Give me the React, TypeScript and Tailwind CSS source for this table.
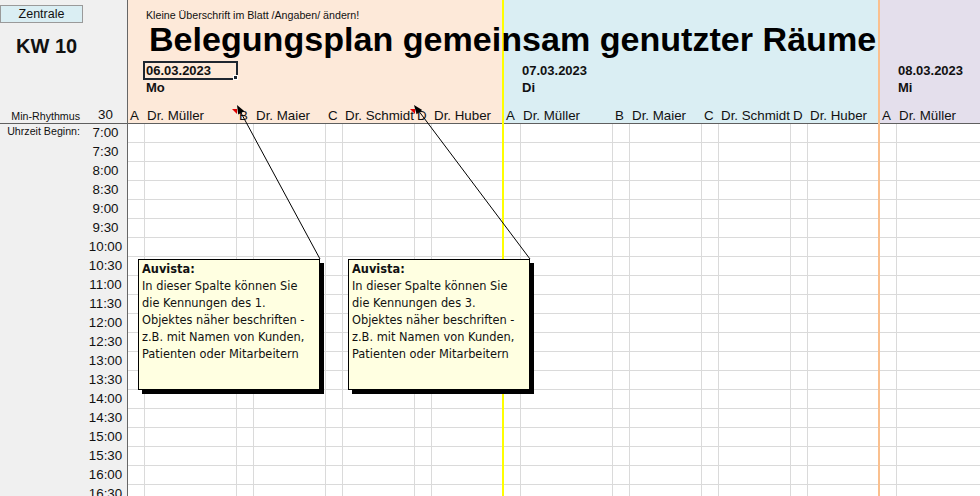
import React from 'react'

const cols = 'grid grid-cols-[17px_92px_17px_72px_17px_72px_17px_70px]'
const names = ['A', 'Dr. Müller', 'B', 'Dr. Maier', 'C', 'Dr. Schmidt', 'D', 'Dr. Huber']

const times: string[] = []
for (let h = 7; h <= 16; h++) {
  times.push(`${h}:00`)
  times.push(`${h}:30`)
}

type Day = { date: string; name: string; bg: string; line: string; first?: boolean }

const days: Day[] = [
  { date: '06.03.2023', name: 'Mo', bg: 'bg-[#fde9d9]', line: 'border-r-[#ffff00]', first: true },
  { date: '07.03.2023', name: 'Di', bg: 'bg-[#daeef3]', line: 'border-r-[#fac08f]' },
  { date: '08.03.2023', name: 'Mi', bg: 'bg-[#e4dfec]', line: 'border-r-[#fac08f]' },
]

function RedMark() {
  return (
    <span className="absolute right-0 top-[1px] w-0 h-0 border-l-[5px] border-l-transparent border-t-[5px] border-t-[#e00000]" />
  )
}

function DayColumn({ day }: { day: Day }) {
  return (
    <div className={`w-[376px] shrink-0 flex flex-col border-r-2 ${day.line}`}>
      <div className={`h-[104px] shrink-0 ${day.bg}`}>
        <div className="h-[22px] pt-[8px] pl-[18px] text-[10.67px] leading-[14px] whitespace-nowrap">
          {day.first && 'Kleine Überschrift im Blatt /Angaben/ ändern!'}
        </div>
        <div className="h-[34px] pl-[21px]">
          {day.first && (
            <div className="relative z-10 whitespace-nowrap text-[34.1px] leading-[34px] font-bold text-black">
              Belegungsplan gemeinsam genutzter Räume
            </div>
          )}
        </div>
        <div
          className={`relative mt-[5px] ml-[15px] w-[95px] h-[19px] border-2 pl-[1px] text-[13px] leading-[16px] font-bold ${
            day.first ? 'border-[#1e2630]' : 'border-transparent'
          }`}
        >
          {day.date}
          {day.first && (
            <span className="absolute right-[-2px] bottom-[-2px] w-[5px] h-[5px] bg-[#1e2630] border border-white" />
          )}
        </div>
        <div className="ml-[18px] text-[13px] leading-[16px] font-bold">{day.name}</div>
      </div>
      <div className={`${cols} h-[20px] shrink-0 border-b border-[#5f5f5f] ${day.bg} pt-[4px] text-[13.33px] leading-[15px]`}>
        {names.map((n, i) => (
          <div key={i} className="relative pl-[2px] whitespace-nowrap">
            {n}
            {day.first && (i === 1 || i === 5) && <RedMark />}
          </div>
        ))}
      </div>
      <div className="flex flex-col">
        {times.map((t) => (
          <div key={t} className={`${cols} shrink-0`}>
            {names.map((_, i) => (
              <div
                key={i}
                className={`h-[19px] border-b border-[#dadada] ${i < 7 ? 'border-r' : ''}`}
              />
            ))}
          </div>
        ))}
      </div>
    </div>
  )
}

function Comment({ left, num }: { left: string; num: string }) {
  return (
    <div
      className={`absolute ${left} top-[259px] z-30 w-[182px] h-[131px] border border-black bg-[#ffffe1] shadow-[4px_4px_0_#000] pl-[3px] pt-[1px] font-['DejaVu_Sans',sans-serif] text-[11.4px] leading-[17px] text-[#111] whitespace-nowrap`}
    >
      <div className="font-bold">Auvista:</div>
      <div>In dieser Spalte können Sie</div>
      <div>die Kennungen des {num}</div>
      <div>Objektes näher beschriften -</div>
      <div>z.B. mit Namen von Kunden,</div>
      <div>Patienten oder Mitarbeitern</div>
    </div>
  )
}

export default function App() {
  return (
    <div className="relative w-[980px] h-[496px] overflow-hidden flex items-start bg-white text-[#111] font-['Liberation_Sans',Arial,sans-serif]">
      <div className="w-[128px] shrink-0 flex flex-col border-r border-[#666] bg-[#f0f0f0]">
        <div className="h-[104px] shrink-0">
          <div className="mt-[5px] w-[83px] h-[18px] border border-[#9a9a9a] bg-[#daeef3] flex items-center justify-center text-[12.5px] leading-none">
            Zentrale
          </div>
          <div className="mt-[11px] ml-[16px] text-[20px] leading-[24px] font-bold">KW 10</div>
        </div>
        <div className="h-[20px] shrink-0 flex border-b border-[#5f5f5f]">
          <div className="w-[84px] pr-[4px] pt-[5px] text-right text-[10.67px] leading-[14px]">Min-Rhythmus</div>
          <div className="flex-1 pt-[3px] text-center text-[13.33px] leading-[15px]">30</div>
        </div>
        {times.map((t, i) => (
          <div key={t} className="h-[19px] flex shrink-0">
            <div className="w-[84px] pr-[4px] text-right text-[10.67px] leading-[14px] whitespace-nowrap">
              {i === 0 && 'Uhrzeit Beginn:'}
            </div>
            <div className="flex-1 text-center text-[13.33px] leading-[18px]">{t}</div>
          </div>
        ))}
      </div>

      {days.map((d) => (
        <DayColumn key={d.date} day={d} />
      ))}

      <svg className="absolute inset-0 z-20 pointer-events-none" width="980" height="496">
        <line x1="240" y1="111" x2="320" y2="259" stroke="#000" strokeWidth="1" />
        <polygon points="237,105 238.2,114.6 244.4,111.2" fill="#000" />
        <line x1="418" y1="110" x2="530" y2="259" stroke="#000" strokeWidth="1" />
        <polygon points="414,105 416.6,114.3 422.2,110.1" fill="#000" />
      </svg>

      <Comment left="left-[138px]" num="1." />
      <Comment left="left-[348px]" num="3." />
    </div>
  )
}
